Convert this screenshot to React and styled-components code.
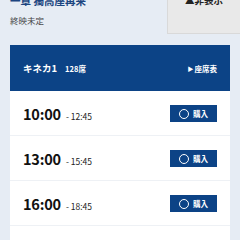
import React from "react";
import styled, { createGlobalStyle } from "styled-components";

const Global = createGlobalStyle`
  html, body { margin: 0; padding: 0; background: #e6ecf4; }
  body { font-family: "Noto Sans CJK JP", "Noto Sans", sans-serif; overflow: hidden; }
`;

const Page = styled.div`
  width: 240px;
  height: 240px;
  overflow: hidden;
  background: #e6ecf4;
`;

const Top = styled.div`
  display: flex;
  align-items: flex-start;
  height: 34px;
`;

const Info = styled.div`
  padding-left: 10px;
  display: flex;
  flex-direction: column;
`;

const Title = styled.div`
  margin-top: -5px;
  font-size: 10.5px;
  line-height: 12px;
  font-weight: 700;
  color: #1b4580;
  white-space: nowrap;
`;

const Sub = styled.div`
  margin-top: 7px;
  font-size: 8.5px;
  line-height: 12px;
  color: #444;
`;

const HideBox = styled.div`
  margin-left: auto;
  width: 72px;
  height: 33px;
  background: #e9e9e9;
  border-left: 1px solid #d9d9d9;
  border-bottom: 1px solid #d9d9d9;
  display: flex;
  justify-content: center;
  align-items: flex-start;
`;

const HideLabel = styled.div`
  margin-top: -6px;
  font-size: 9.5px;
  line-height: 12px;
  font-weight: 700;
  color: #222;
`;

const Card = styled.div`
  margin: 11px 10px 0;
  background: #fff;
`;

const Header = styled.div`
  height: 46px;
  background: #0c4386;
  display: flex;
  align-items: center;
  padding: 0 13px;
  color: #fff;
  font-weight: 700;
`;

const Theater = styled.span`
  font-size: 9.5px;
`;

const Seats = styled.span`
  font-size: 7.5px;
  margin-left: 8px;
`;

const SeatMap = styled.span`
  margin-left: auto;
  font-size: 7.5px;
  display: flex;
  align-items: center;
  gap: 1px;
`;

const Tri = styled.span`
  font-size: 6px;
`;

const Row = styled.div`
  height: 45px;
  box-sizing: border-box;
  border-bottom: 1px solid #eef1f5;
  display: flex;
  align-items: center;
  padding: 0 13px;
`;

const Times = styled.div`
  display: flex;
  align-items: baseline;
  margin-top: 1px;
`;

const Start = styled.span`
  font-size: 14.5px;
  font-weight: 700;
  color: #111;
  letter-spacing: -0.2px;
`;

const End = styled.span`
  font-size: 8.5px;
  color: #222;
  margin-left: 5px;
`;

const Buy = styled.button`
  margin-left: auto;
  width: 47px;
  height: 17px;
  border: none;
  padding: 0;
  background: #0c4386;
  color: #fff;
  display: flex;
  align-items: center;
  justify-content: center;
  gap: 4px;
  font-family: inherit;
  font-size: 7.5px;
  font-weight: 700;
  margin-top: 1px;
`;

const Circle = styled.span`
  width: 8px;
  height: 8px;
  border: 1px solid #fff;
  border-radius: 50%;
`;

const shows = [
  ["10:00", "12:45"],
  ["13:00", "15:45"],
  ["16:00", "18:45"],
  ["19:00", "21:45"],
];

export default function App() {
  return (
    <Page>
      <Global />
      <Top>
        <Info>
          <Title>一章 獨高座再来</Title>
          <Sub>終映未定</Sub>
        </Info>
        <HideBox>
          <HideLabel>▲非表示</HideLabel>
        </HideBox>
      </Top>
      <Card>
        <Header>
          <Theater>キネカ1</Theater>
          <Seats>128席</Seats>
          <SeatMap>
            <Tri>▶</Tri>座席表
          </SeatMap>
        </Header>
        {shows.map(([s, e]) => (
          <Row key={s}>
            <Times>
              <Start>{s}</Start>
              <End>- {e}</End>
            </Times>
            <Buy>
              <Circle />
              購入
            </Buy>
          </Row>
        ))}
      </Card>
    </Page>
  );
}
